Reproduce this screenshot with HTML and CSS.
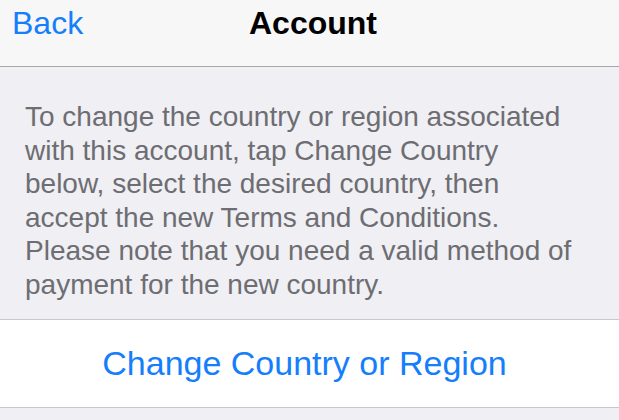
FILE: index.html
```html
<!DOCTYPE html>
<html>
<head>
<meta charset="utf-8">
<link rel="stylesheet" href="styles.css">
</head>
<body>
<div class="nav">
  <span class="back">Back</span>
  <span class="title">Account</span>
  <span class="spacer"></span>
</div>
<p class="info">To change the country or region associated with this account, tap Change Country below, select the desired country, then accept the new Terms and Conditions. Please note that you need a valid method of payment for the new country.</p>
<div class="cell">Change Country or Region</div>
</body>
</html>
```
FILE: styles.css
```css
html, body { margin: 0; padding: 0; }
body {
  background: #efeff4;
  font-family: "Liberation Sans", Arial, sans-serif;
  width: 619px;
  height: 420px;
  overflow: hidden;
}
.nav {
  height: 67px;
  box-sizing: border-box;
  padding: 3px 12px 0 12px;
  background: #f7f7f7;
  border-bottom: 1px solid #a7a7aa;
  display: grid;
  grid-template-columns: 1fr auto 1fr;
  align-items: start;
  font-size: 32px;
  line-height: 40px;
}
.back {
  justify-self: start;
  color: #157efb;
}
.title {
  margin-left: 7px;
  font-weight: bold;
  color: #000;
}
.info {
  margin: 0;
  padding: 33px 38px 17px 25px;
  font-size: 28px;
  line-height: 33.6px;
  color: #6d6d72;
}
.cell {
  background: #fff;
  border-top: 1px solid #c8c7cc;
  border-bottom: 1px solid #c8c7cc;
  height: 87px;
  display: flex;
  align-items: center;
  justify-content: center;
  padding-right: 10px;
  font-size: 34px;
  color: #157efb;
}
```
